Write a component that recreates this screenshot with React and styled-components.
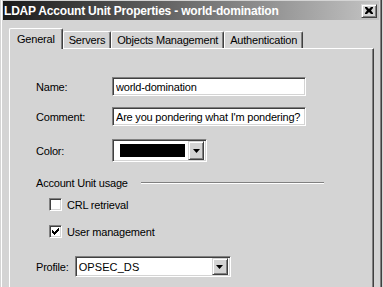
import React, { useState } from "react";
import styled, { createGlobalStyle } from "styled-components";

const GlobalStyle = createGlobalStyle`
  html, body {
    margin: 0;
    padding: 0;
    background: #d4d4d4;
  }
  body {
    font-family: "Liberation Sans", Arial, sans-serif;
    font-size: 11px;
    letter-spacing: -0.2px;
    color: #000;
  }
  * {
    box-sizing: border-box;
  }
`;

const tabs = ["General", "Servers", "Objects Management", "Authentication"];

function CloseIcon() {
  return (
    <svg width="8" height="7" viewBox="0 0 8 7">
      <path d="M0 0h2l2 2 2-2h2v1L6 3.5 8 6v1H6L4 5 2 7H0V6l2-2.5L0 1z" fill="#000" />
    </svg>
  );
}

function Arrow() {
  return (
    <svg width="7" height="4" viewBox="0 0 7 4">
      <polygon points="0,0 7,0 3.5,4" fill="#000" />
    </svg>
  );
}

function CheckMark() {
  // classic 7x7 pixel tick, one 1x3 column at a time
  const rows = [2, 3, 4, 3, 2, 1, 0];
  return (
    <svg width="7" height="7" viewBox="0 0 7 7">
      {rows.map((r, i) => (
        <rect key={i} x={i} y={r} width="1" height="3" fill="#000" />
      ))}
    </svg>
  );
}

function App() {
  const [active, setActive] = useState(0);
  const [name, setName] = useState("world-domination");
  const [comment, setComment] = useState("Are you pondering what I'm pondering?");
  const [crl, setCrl] = useState(false);
  const [userMgmt, setUserMgmt] = useState(true);

  return (
    <>
      <GlobalStyle />
      <Window>
        <TitleBar>
          <Title>LDAP Account Unit Properties - world-domination</Title>
          <RaisedButton as="div" $w={16} $h={14}>
            <CloseIcon />
          </RaisedButton>
        </TitleBar>
        <Body>
          <TabRow>
            {tabs.map((t, i) => (
              <Tab key={t} $active={i === active} onClick={() => setActive(i)}>
                {t}
              </Tab>
            ))}
          </TabRow>
          <Panel>
            <FieldRow>
              <Label>Name:</Label>
              <TextBox value={name} onChange={(e) => setName(e.target.value)} />
            </FieldRow>
            <FieldRow $top={11}>
              <Label>Comment:</Label>
              <TextBox value={comment} onChange={(e) => setComment(e.target.value)} />
            </FieldRow>
            <FieldRow $top={13}>
              <Label>Color:</Label>
              <ColorCombo>
                <Swatch />
                <RaisedButton $w={16} $h={19}>
                  <Arrow />
                </RaisedButton>
              </ColorCombo>
            </FieldRow>
            <GroupHeader>
              <span>Account Unit usage</span>
              <Etched />
            </GroupHeader>
            <CheckRow $top={9} onClick={() => setCrl(!crl)}>
              <CheckBox>{crl && <CheckMark />}</CheckBox>
              CRL retrieval
            </CheckRow>
            <CheckRow $top={14} onClick={() => setUserMgmt(!userMgmt)}>
              <CheckBox>{userMgmt && <CheckMark />}</CheckBox>
              User management
            </CheckRow>
            <ProfileRow>
              <span>Profile:</span>
              <Select>
                <SelectValue>OPSEC_DS</SelectValue>
                <RaisedButton $w={16} $h={17}>
                  <Arrow />
                </RaisedButton>
              </Select>
            </ProfileRow>
          </Panel>
        </Body>
      </Window>
    </>
  );
}

const Window = styled.div`
  width: 382px;
  height: 287px;
  overflow: hidden;
  display: flex;
  flex-direction: column;
  background: #d4d4d4;
  border-left: 1px solid #d4d4d4;
  border-right: 1px solid #404040;
  box-shadow: inset 1px 0 #fff, inset -1px 0 #808080;
`;

const TitleBar = styled.div`
  height: 19px;
  margin: 1px 2px 0;
  padding: 0 2px 0 1px;
  display: flex;
  align-items: center;
  justify-content: space-between;
  background: linear-gradient(to right, #1a1a1a, #c4c4c4);
`;

const Title = styled.div`
  color: #fff;
  font-weight: bold;
  font-size: 12px;
  padding-top: 1px;
  white-space: nowrap;
`;

const RaisedButton = styled.button`
  width: ${(p) => p.$w}px;
  height: ${(p) => p.$h}px;
  padding: 0;
  flex: none;
  display: flex;
  align-items: center;
  justify-content: center;
  background: #d4d4d4;
  border: 1px solid;
  border-color: #d4d4d4 #404040 #404040 #d4d4d4;
  box-shadow: inset 1px 1px #fff, inset -1px -1px #808080;
`;

const Body = styled.div`
  flex: 1;
  display: flex;
  flex-direction: column;
  padding: 8px 7px 0 8px;
`;

const TabRow = styled.div`
  height: 20px;
  display: flex;
  align-items: flex-end;
  position: relative;
  z-index: 1;
`;

const Tab = styled.div`
  height: ${(p) => (p.$active ? 21 : 17)}px;
  margin-bottom: ${(p) => (p.$active ? -1 : 0)}px;
  padding: ${(p) => (p.$active ? "3px 7px 0" : "1px 5px 0")};
  line-height: 15px;
  white-space: nowrap;
  background: #d4d4d4;
  border-top: 1px solid #fff;
  border-left: 1px solid #fff;
  border-right: 1px solid #404040;
  border-radius: 2px 2px 0 0;
  box-shadow: inset -1px 0 #808080;
  cursor: default;
`;

const Panel = styled.div`
  flex: 1;
  padding: 28px 0 0 26px;
  border-top: 1px solid #fff;
  border-left: 1px solid #fff;
  border-right: 1px solid #404040;
  box-shadow: inset -1px 0 #808080;
`;

const FieldRow = styled.div`
  display: flex;
  align-items: center;
  margin-top: ${(p) => p.$top || 0}px;
`;

const Label = styled.span`
  width: 76px;
  flex: none;
`;

const sunken = `
  border: 1px solid;
  border-color: #808080 #fff #fff #808080;
  box-shadow: inset 1px 1px #404040, inset -1px -1px #d4d4d4;
`;

const TextBox = styled.input`
  ${sunken}
  width: 194px;
  height: 19px;
  padding: 0 0 0 3px;
  margin: 0;
  font: inherit;
  letter-spacing: inherit;
  background: #fff;
  outline: none;
`;

const ColorCombo = styled.div`
  ${sunken}
  width: 95px;
  height: 23px;
  padding: 2px;
  display: flex;
  align-items: center;
  justify-content: space-between;
  background: #fff;
`;

const Swatch = styled.div`
  width: 65px;
  height: 13px;
  margin-left: 5px;
  background: #000;
`;

const GroupHeader = styled.div`
  width: 288px;
  height: 13px;
  margin-top: 14px;
  display: flex;
  align-items: center;
  gap: 13px;
`;

const Etched = styled.div`
  flex: 1;
  height: 2px;
  border-top: 1px solid #808080;
  border-bottom: 1px solid #fff;
`;

const CheckRow = styled.div`
  display: flex;
  align-items: center;
  gap: 5px;
  height: 13px;
  margin: ${(p) => p.$top}px 0 0 13px;
  cursor: default;
`;

const CheckBox = styled.div`
  ${sunken}
  width: 13px;
  height: 13px;
  flex: none;
  background: #fff;
  display: flex;
  align-items: center;
  justify-content: center;
`;

const ProfileRow = styled.div`
  display: flex;
  align-items: center;
  gap: 6px;
  margin-top: 18px;
`;

const Select = styled.div`
  ${sunken}
  width: 156px;
  height: 21px;
  padding: 2px;
  display: flex;
  align-items: center;
  background: #fff;
`;

const SelectValue = styled.span`
  flex: 1;
  padding-left: 1px;
  letter-spacing: 0.1px;
`;

export default App;
